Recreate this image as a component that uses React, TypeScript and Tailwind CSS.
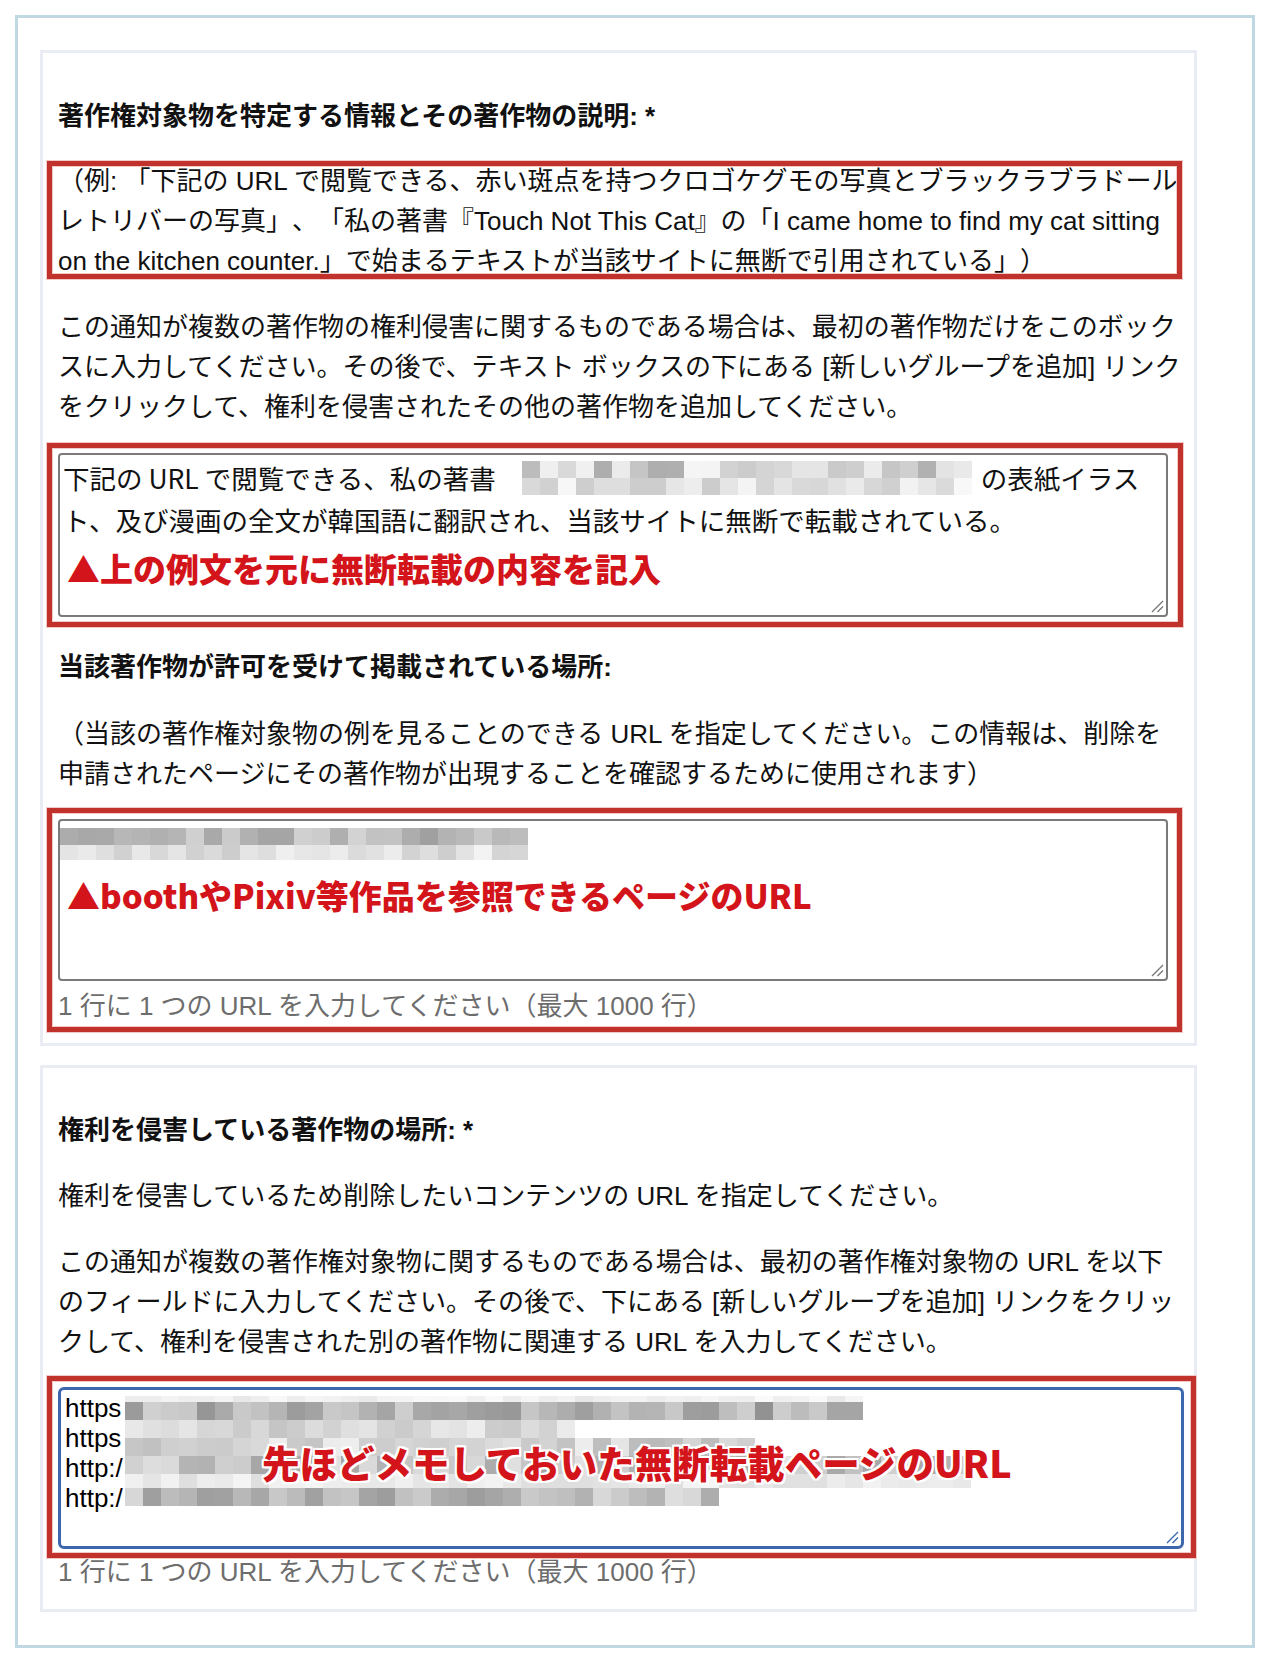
import React from "react";

type MRow = { cols: number; min: number; max: number; h: number };

function makeRand(seed: number) {
  let s = seed >>> 0;
  return () => {
    s = (Math.imul(s, 1664525) + 1013904223) >>> 0;
    return s / 4294967296;
  };
}

function Mosaic({ rows, seed, cellW, className = "" }: { rows: MRow[]; seed: number; cellW: number; className?: string }) {
  const rnd = makeRand(seed);
  return (
    <div className={"flex flex-col " + className}>
      {rows.map((r, i) => (
        <div key={i} className="flex">
          {Array.from({ length: r.cols }).map((_, j) => {
            const v = Math.round(r.min + rnd() * (r.max - r.min));
            return <div key={j} style={{ width: cellW, height: r.h, backgroundColor: `rgb(${v},${v},${v})` }} />;
          })}
        </div>
      ))}
    </div>
  );
}

function RedBox({ className }: { className: string }) {
  return (
    <div
      className={
        "pointer-events-none absolute border-[5px] border-[#c1322d] shadow-[0_0_0_1px_#f1c9c7,inset_0_0_0_1px_#f1c9c7] " + className
      }
    />
  );
}

function Grip({ color }: { color: string }) {
  return (
    <svg className="absolute bottom-[2px] right-[2px]" width="14" height="14" viewBox="0 0 14 14">
      <path d="M13 2 L2 13 M13 7.5 L7.5 13" stroke={color} strokeWidth="1.4" fill="none" />
    </svg>
  );
}

const annot =
  "font-['Noto_Sans_CJK_JP',sans-serif] font-black text-[#d3141a] [text-shadow:2px_0_0_#fff,-2px_0_0_#fff,0_2px_0_#fff,0_-2px_0_#fff,2px_2px_0_#fff,-2px_-2px_0_#fff,2px_-2px_0_#fff,-2px_2px_0_#fff]";

export default function App() {
  return (
    <div className="w-[1270px] h-[1676px] bg-white pl-[15px] pt-[15px] font-['Liberation_Sans','Noto_Sans_CJK_JP',sans-serif] text-[26px] leading-[40px] text-[#111] [text-spacing-trim:space-all]">
      <div className="w-[1240px] h-[1633px] border-[3px] border-[#bfd8e2] pl-[22px] pt-[32px] flex flex-col gap-[19px]">
        {/* Card 1 */}
        <section className="w-[1157px] border-[3px] border-[#e9ecf2] pl-[15px] pr-[12px] pt-[43px] pb-[20px]">
          <h2 className="font-bold whitespace-nowrap">著作権対象物を特定する情報とその著作物の説明: *</h2>
          <div className="relative mt-[25px]">
            <p className="whitespace-nowrap">
              （例: 「下記の URL で閲覧できる、赤い斑点を持つクロゴケグモの写真とブラックラブラドール
              <br />
              レトリバーの写真」、「私の著書『Touch Not This Cat』の「I came home to find my cat sitting
              <br />
              on the kitchen counter.」で始まるテキストが当該サイトに無断で引用されている」）
            </p>
            <RedBox className="-left-[11px] right-0 top-0 bottom-[2px]" />
          </div>
          <p className="mt-[26px] whitespace-nowrap">
            この通知が複数の著作物の権利侵害に関するものである場合は、最初の著作物だけをこのボック
            <br />
            スに入力してください。その後で、テキスト ボックスの下にある [新しいグループを追加] リンク
            <br />
            をクリックして、権利を侵害されたその他の著作物を追加してください。
          </p>
          <div className="relative mt-[26px] w-[1110px]">
            <div className="relative h-[164px] border-2 border-[#7a7a7a] rounded-[4px] bg-white pl-[3px] pt-[2px] font-['Noto_Sans_CJK_JP',sans-serif] text-[26.5px] leading-[42px] text-[#111]">
              <div className="flex items-center h-[42px] whitespace-nowrap">
                <span>下記の URL で閲覧できる、私の著書</span>
                <Mosaic
                  className="ml-[26px]"
                  seed={7}
                  cellW={18}
                  rows={[
                    { cols: 25, min: 170, max: 246, h: 17 },
                    { cols: 25, min: 200, max: 248, h: 17 },
                  ]}
                />
                <span className="ml-[9px]">の表紙イラス</span>
              </div>
              <div className="whitespace-nowrap">ト、及び漫画の全文が韓国語に翻訳され、当該サイトに無断で転載されている。</div>
              <div className={"mt-[7px] ml-[4px] text-[33px] leading-[40px] whitespace-nowrap " + annot}>▲上の例文を元に無断転載の内容を記入</div>
              <Grip color="#7a7a7a" />
            </div>
            <RedBox className="-left-[11px] -right-[15px] -top-[10px] -bottom-[10px]" />
          </div>
          <h2 className="mt-[30px] font-bold whitespace-nowrap">当該著作物が許可を受けて掲載されている場所:</h2>
          <p className="mt-[27px] whitespace-nowrap">
            （当該の著作権対象物の例を見ることのできる URL を指定してください。この情報は、削除を
            <br />
            申請されたページにその著作物が出現することを確認するために使用されます）
          </p>
          <div className="relative mt-[25px]">
            <div className="relative w-[1110px] h-[162px] border-2 border-[#7a7a7a] rounded-[4px] bg-white pt-[7px]">
              <Mosaic
                seed={21}
                cellW={18}
                rows={[
                  { cols: 26, min: 158, max: 215, h: 17 },
                  { cols: 26, min: 205, max: 245, h: 15 },
                ]}
              />
              <div className={"mt-[15px] ml-[7px] text-[33px] leading-[40px] whitespace-nowrap " + annot}>▲boothやPixiv等作品を参照できるページのURL</div>
              <Grip color="#7a7a7a" />
            </div>
            <p className="mt-[8px] text-[26px] leading-[34px] text-[#6d6d6d] whitespace-nowrap">1 行に 1 つの URL を入力してください（最大 1000 行）</p>
            <RedBox className="-left-[11px] right-0 -top-[11px] -bottom-[9px]" />
          </div>
        </section>

        {/* Card 2 */}
        <section className="w-[1157px] border-[3px] border-[#e9ecf2] pl-[15px] pr-[12px] pt-[42px] pb-[20px]">
          <h2 className="font-bold whitespace-nowrap">権利を侵害している著作物の場所: *</h2>
          <p className="mt-[26px] whitespace-nowrap">権利を侵害しているため削除したいコンテンツの URL を指定してください。</p>
          <p className="mt-[26px] whitespace-nowrap">
            この通知が複数の著作権対象物に関するものである場合は、最初の著作権対象物の URL を以下
            <br />
            のフィールドに入力してください。その後で、下にある [新しいグループを追加] リンクをクリッ
            <br />
            クして、権利を侵害された別の著作物に関連する URL を入力してください。
          </p>
          <div className="relative mt-[25px] w-[1126px]">
            <div className="relative h-[162px] border-[3px] border-[#3d66ad] rounded-[6px] bg-white pl-[4px] pt-[3px] font-['Liberation_Sans',sans-serif] text-[26px] leading-[30px] text-black">
              <div>https</div>
              <div>https</div>
              <div>http:/</div>
              <div>http:/</div>
              <div className="absolute left-[64px] top-[6px]">
                <Mosaic
                  seed={99}
                  cellW={18}
                  rows={[
                    { cols: 41, min: 232, max: 250, h: 6 },
                    { cols: 41, min: 145, max: 208, h: 18 },
                    { cols: 25, min: 192, max: 238, h: 18 },
                    { cols: 35, min: 185, max: 240, h: 18 },
                    { cols: 47, min: 165, max: 226, h: 18 },
                    { cols: 47, min: 222, max: 246, h: 14 },
                    { cols: 33, min: 148, max: 222, h: 18 },
                  ]}
                />
              </div>
              <div className={"absolute left-[201px] top-[52px] text-[37.5px] leading-[40px] whitespace-nowrap " + annot}>
                先ほどメモしておいた無断転載ページのURL
              </div>
              <Grip color="#3d66ad" />
            </div>
            <RedBox className="-left-[11px] -right-[12px] -top-[11px] -bottom-[9px]" />
          </div>
          <p className="mt-[6px] text-[26px] leading-[34px] text-[#6d6d6d] whitespace-nowrap">1 行に 1 つの URL を入力してください（最大 1000 行）</p>
        </section>
      </div>
    </div>
  );
}
